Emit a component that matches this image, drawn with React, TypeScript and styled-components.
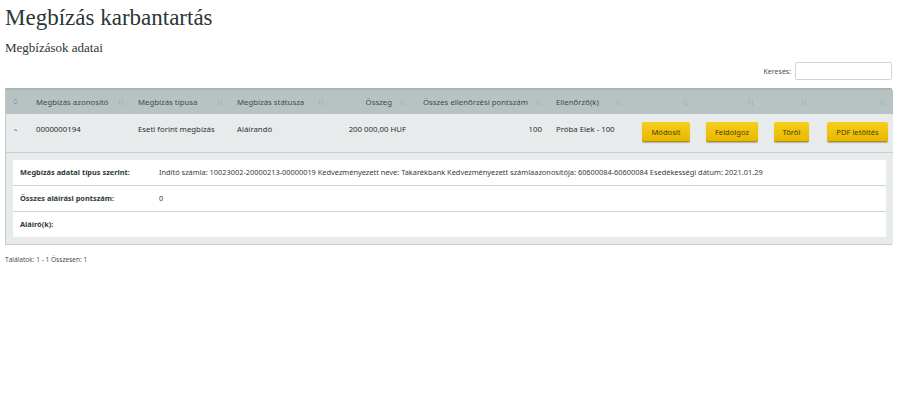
import React from "react";
import styled, { createGlobalStyle } from "styled-components";

const Global = createGlobalStyle`
  html, body { margin: 0; padding: 0; background: #fff; }
  body { font-family: "Noto Sans", "Open Sans", sans-serif; color: #333; }
`;

const Page = styled.div`
  padding: 0 8px 0 5px;
`;

const Title = styled.h1`
  font-family: "Liberation Serif", "DejaVu Serif", serif;
  font-weight: 400;
  font-size: 23px;
  color: #2b3636;
  margin: 5px 0 0 0;
  line-height: 26px;
`;

const SubTitle = styled.h2`
  font-family: "Liberation Serif", "DejaVu Serif", serif;
  font-weight: 400;
  font-size: 13px;
  color: #2b3636;
  margin: 9px 0 0 0;
  line-height: 16px;
`;

const SearchBar = styled.div`
  display: flex;
  justify-content: flex-end;
  align-items: center;
  gap: 4px;
  margin-top: 6px;
  height: 18px;
  font-family: "Open Sans", sans-serif;
  font-size: 7px;
  color: #444;
`;

const SearchInput = styled.input`
  width: 97px;
  height: 18px;
  box-sizing: border-box;
  border: 1px solid #cfd4d4;
  border-radius: 2px;
  padding: 0 4px;
  margin: 0;
  outline: none;
`;

const Grid = styled.div`
  margin-top: 8px;
  border: 1px solid #c2cbcb;
  border-top: 2px solid #a9b5b5;
`;

const Table = styled.table`
  width: 100%;
  border-collapse: collapse;
  table-layout: fixed;
  font-size: 7.8px;
`;

const HeadRow = styled.tr`
  background: #b7c3c3;
  height: 24px;
`;

const Th = styled.th`
  font-weight: 400;
  color: #3f4b4b;
  text-align: left;
  padding: 0 7px;
  white-space: nowrap;
`;

const ThInner = styled.div<{ $align?: string }>`
  display: flex;
  align-items: center;
  justify-content: ${(p) => (p.$align === "right" ? "flex-end" : "space-between")};
  gap: 8px;
`;

const DataRow = styled.tr`
  background: #e8ebec;
  height: 38px;
`;

const Td = styled.td<{ $align?: string }>`
  color: #2e2e2e;
  text-align: ${(p) => p.$align || "left"};
  padding: 10px 7px 0 7px;
  vertical-align: top;
  white-space: nowrap;
`;

const BtnTd = styled.td`
  text-align: center;
  vertical-align: top;
  padding: 8px 0 0 8px;
`;

const Button = styled.button`
  font-family: "Noto Sans", sans-serif;
  font-size: 7.6px;
  color: #4a3c00;
  background: linear-gradient(#f6cf1a, #e9b800);
  border: none;
  border-bottom: 1px solid #b88f00;
  border-radius: 2px;
  box-shadow: 0 1px 1px rgba(0, 0, 0, 0.25);
  height: 20px;
  padding: 0 9px;
  cursor: pointer;
`;

const DetailRow = styled.tr`
  background: #e8ebec;
  border-top: 1px solid #c8d0d0;
`;

const DetailCell = styled.td`
  padding: 7px 7px 7px 7px;
`;

const DetailPanel = styled.div`
  background: #fff;
`;

const DetailItem = styled.div`
  display: flex;
  align-items: center;
  height: 25px;
  border-top: 1px solid #cfd4d4;
  font-size: 7.4px;
  &:first-child { border-top: none; }
`;

const DetailLabel = styled.div`
  width: 139px;
  padding-left: 7px;
  font-weight: 700;
  color: #2f3a3a;
`;

const DetailValue = styled.div`
  color: #3a3a3a;
  white-space: nowrap;
`;

const Footer = styled.div`
  margin-top: 10px;
  font-family: "Open Sans", sans-serif;
  font-size: 6.6px;
  color: #444;
`;

const ChevronsIcon = () => (
  <svg width="5" height="7" viewBox="0 0 5 7">
    <path d="M1 2.5 L2.5 1 L4 2.5 M1 4.5 L2.5 6 L4 4.5" fill="none" stroke="#7a72a8" strokeWidth="0.8" />
  </svg>
);

const UpIcon = () => (
  <svg width="5" height="4" viewBox="0 0 5 4">
    <path d="M1 3 L2.5 1.4 L4 3" fill="none" stroke="#6d5fa6" strokeWidth="0.9" />
  </svg>
);

const Sort = () => (
  <svg width="6" height="7" viewBox="0 0 6 7">
    <path
      d="M1.5 6.5 V0.8 M0.4 1.9 L1.5 0.8 L2.6 1.9 M4.5 0.5 V6.2 M3.4 5.1 L4.5 6.2 L5.6 5.1"
      fill="none"
      stroke="#9eaeae"
      strokeWidth="0.6"
    />
  </svg>
);

const cols = [23, 102, 99, 101, 82, 136, 80, 66, 66, 53, 79];

export default function App() {
  return (
    <Page>
      <Global />
      <Title>Megbízás karbantartás</Title>
      <SubTitle>Megbízások adatai</SubTitle>
      <SearchBar>
        <span>Keresés:</span>
        <SearchInput />
      </SearchBar>
      <Grid>
        <Table>
          <colgroup>
            {cols.map((w, i) => (
              <col key={i} style={{ width: w }} />
            ))}
          </colgroup>
          <thead>
            <HeadRow>
              <Th><ChevronsIcon /></Th>
              <Th><ThInner>Megbízás azonosító<Sort /></ThInner></Th>
              <Th><ThInner>Megbízás típusa<Sort /></ThInner></Th>
              <Th><ThInner>Megbízás státusza<Sort /></ThInner></Th>
              <Th><ThInner $align="right">Összeg<Sort /></ThInner></Th>
              <Th><ThInner $align="right">Összes ellenőrzési pontszám<Sort /></ThInner></Th>
              <Th><ThInner>Ellenőrző(k)<Sort /></ThInner></Th>
              <Th><ThInner $align="right"><Sort /></ThInner></Th>
              <Th><ThInner $align="right"><Sort /></ThInner></Th>
              <Th><ThInner $align="right"><Sort /></ThInner></Th>
              <Th><ThInner $align="right"><Sort /></ThInner></Th>
            </HeadRow>
          </thead>
          <tbody>
            <DataRow>
              <Td><UpIcon /></Td>
              <Td>0000000194</Td>
              <Td>Eseti forint megbízás</Td>
              <Td>Aláírandó</Td>
              <Td $align="right">200 000,00 HUF</Td>
              <Td $align="right">100</Td>
              <Td>Próba Elek - 100</Td>
              <BtnTd><Button>Módosít</Button></BtnTd>
              <BtnTd><Button>Feldolgoz</Button></BtnTd>
              <BtnTd><Button>Töröl</Button></BtnTd>
              <BtnTd><Button>PDF letöltés</Button></BtnTd>
            </DataRow>
            <DetailRow>
              <DetailCell colSpan={11}>
                <DetailPanel>
                  <DetailItem>
                    <DetailLabel>Megbízás adatai típus szerint:</DetailLabel>
                    <DetailValue>
                      Indító számla: 10023002-20000213-00000019 Kedvezményezett neve: Takarékbank Kedvezményezett számlaazonosítója: 60600084-60600084 Esedékességi dátum: 2021.01.29
                    </DetailValue>
                  </DetailItem>
                  <DetailItem>
                    <DetailLabel>Összes aláírási pontszám:</DetailLabel>
                    <DetailValue>0</DetailValue>
                  </DetailItem>
                  <DetailItem>
                    <DetailLabel>Aláíró(k):</DetailLabel>
                    <DetailValue></DetailValue>
                  </DetailItem>
                </DetailPanel>
              </DetailCell>
            </DetailRow>
          </tbody>
        </Table>
      </Grid>
      <Footer>Találatok: 1 - 1 Összesen: 1</Footer>
    </Page>
  );
}
